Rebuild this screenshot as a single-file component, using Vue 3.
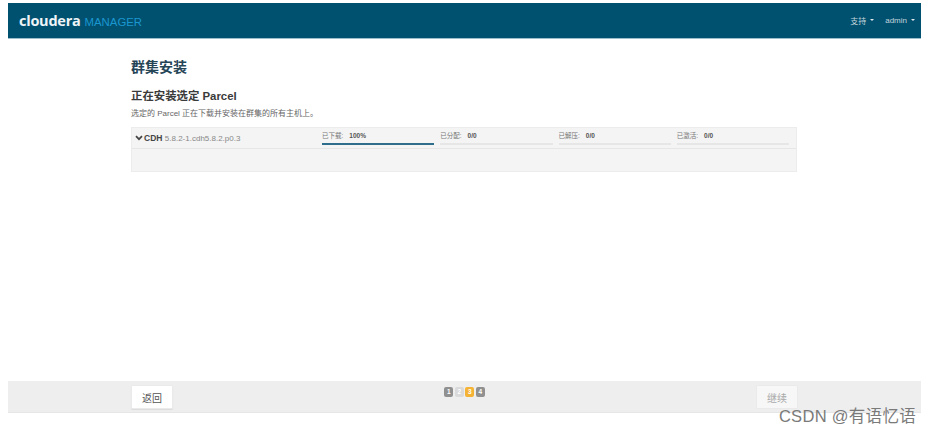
<script setup>
const stages = [
  { label: '已下载:', value: '100%', pct: 100 },
  { label: '已分配:', value: '0/0', pct: 0 },
  { label: '已解压:', value: '0/0', pct: 0 },
  { label: '已激活:', value: '0/0', pct: 0 },
]
const steps = [
  { n: 1, cls: 'done' },
  { n: 2, cls: 'idle' },
  { n: 3, cls: 'active' },
  { n: 4, cls: 'done' },
]
</script>

<template>
  <div class="page">
    <header class="topbar">
      <div class="logo">
        <span class="logo-main">cloudera</span>
        <span class="logo-sub">MANAGER</span>
      </div>
      <nav class="menu">
        <span class="menu-item">支持<i class="caret"></i></span>
        <span class="menu-item">admin<i class="caret"></i></span>
      </nav>
    </header>

    <main class="content">
      <h1 class="title">群集安装</h1>
      <h2 class="subtitle">正在安装选定 Parcel</h2>
      <p class="desc">选定的 Parcel 正在下载并安装在群集的所有主机上。</p>

      <section class="parcel">
        <div class="parcel-row">
          <div class="parcel-name">
            <svg class="chevron" width="8" height="6" viewBox="0 0 8 6">
              <path d="M1 1.2 L4 4.2 L7 1.2" fill="none" stroke="#444" stroke-width="1.7" />
            </svg>
            <b>CDH</b>&nbsp;<span class="version">5.8.2-1.cdh5.8.2.p0.3</span>
          </div>
          <div class="stages">
            <div v-for="s in stages" :key="s.label" class="stage">
              <div class="stage-text">
                <span class="stage-label">{{ s.label }}</span>
                <b class="stage-value">{{ s.value }}</b>
              </div>
              <div class="bar">
                <div class="bar-fill" :style="{ width: s.pct + '%' }"></div>
              </div>
            </div>
          </div>
        </div>
        <div class="parcel-empty"></div>
      </section>
    </main>

    <footer class="footer">
      <button class="btn">返回</button>
      <div class="steps">
        <span v-for="s in steps" :key="s.n" class="step" :class="s.cls">{{ s.n }}</span>
      </div>
      <button class="btn disabled">继续</button>
    </footer>

    <div class="watermark">CSDN @有语忆语</div>
  </div>
</template>

<style>
html, body {
  margin: 0;
  background: #fff;
}
</style>

<style scoped>
.page {
  position: relative;
  width: 932px;
  height: 435px;
  box-sizing: border-box;
  padding: 3px 11px 0 8px;
  display: flex;
  flex-direction: column;
  overflow: hidden;
  font-family: "Liberation Sans", "Noto Sans CJK SC", sans-serif;
  color: #333;
}

.topbar {
  height: 36px;
  flex: none;
  box-sizing: border-box;
  background: #00506f;
  border-bottom: 1px solid #9dbccb;
  display: flex;
  align-items: center;
  justify-content: space-between;
  padding: 0 6px 1px 11px;
}

.logo {
  display: flex;
  align-items: baseline;
  gap: 4px;
}

.logo-main {
  font-family: "Open Sans", "Liberation Sans", sans-serif;
  font-size: 14.5px;
  font-weight: 700;
  color: #eef4f7;
  letter-spacing: -0.25px;
}

.logo-sub {
  font-size: 11.4px;
  color: #1b97cf;
}

.menu {
  display: flex;
  gap: 11px;
  font-size: 8px;
  color: #c5d6de;
}

.menu-item {
  display: flex;
  align-items: center;
}

.caret {
  display: inline-block;
  margin-left: 4px;
  border-left: 2.5px solid transparent;
  border-right: 2.5px solid transparent;
  border-top: 2.5px solid #dfe8ed;
}

.content {
  flex: 1;
  box-sizing: border-box;
  padding: 0 124px 0 123px;
}

.title {
  margin: 19px 0 0;
  font-size: 14px;
  line-height: 18px;
  font-weight: 700;
  color: #254557;
}

.subtitle {
  margin: 13px 0 0;
  font-size: 11.4px;
  line-height: 15px;
  font-weight: 700;
  color: #3a3a3a;
}

.desc {
  margin: 4px 0 0;
  font-size: 8px;
  line-height: 11px;
  color: #666;
}

.parcel {
  margin-top: 8px;
  background: #f4f4f4;
  border: 1px solid #ececec;
  height: 45px;
  box-sizing: border-box;
}

.parcel-row {
  height: 21px;
  display: flex;
  align-items: center;
  box-sizing: border-box;
  border-bottom: 1px solid #e6e6e6;
}

.parcel-name {
  width: 190px;
  flex: none;
  box-sizing: border-box;
  padding-left: 3px;
  font-size: 8.5px;
  color: #444;
  display: flex;
  align-items: center;
  white-space: pre;
}

.chevron {
  margin-right: 1px;
}

.version {
  color: #888;
  font-size: 8px;
}

.stages {
  flex: 1;
  display: flex;
  gap: 6px;
  padding-right: 7px;
}

.stage {
  flex: 1;
}

.stage-text {
  font-size: 6.5px;
  line-height: 9px;
  color: #777;
  display: flex;
  gap: 6px;
}

.stage-value {
  color: #555;
}

.bar {
  margin-top: 3px;
  height: 2px;
  background: #e6e6e6;
}

.bar-fill {
  height: 100%;
  background: #2f6d8c;
}

.footer {
  height: 32px;
  flex: none;
  margin-bottom: 22px;
  box-sizing: border-box;
  background: #eeeeee;
  border-bottom: 1px solid #e6e6e6;
  padding: 4px 123px 0 123px;
  display: flex;
  align-items: flex-start;
  justify-content: space-between;
}

.btn {
  width: 42px;
  height: 24px;
  box-sizing: border-box;
  background: #fff;
  border: 1px solid #eaeaea;
  border-radius: 1px;
  box-shadow: 0 1px 1px rgba(0, 0, 0, 0.08);
  font-family: inherit;
  font-size: 10px;
  color: #555;
  padding: 0;
}

.btn.disabled {
  background: #f7f7f7;
  color: #aaa;
  box-shadow: none;
}

.steps {
  display: flex;
  gap: 1.5px;
  margin-top: 2px;
}

.step {
  width: 9px;
  height: 10px;
  border-radius: 2px;
  font-size: 6.5px;
  line-height: 10px;
  font-weight: 700;
  text-align: center;
  color: #fff;
}

.step.done {
  background: #909090;
}

.step.idle {
  background: #dadada;
}

.step.active {
  background: #f5b335;
}

.watermark {
  position: absolute;
  right: 16px;
  top: 406px;
  font-size: 16.5px;
  line-height: 21px;
  color: #7a7a7a;
  letter-spacing: 0.3px;
}
</style>
